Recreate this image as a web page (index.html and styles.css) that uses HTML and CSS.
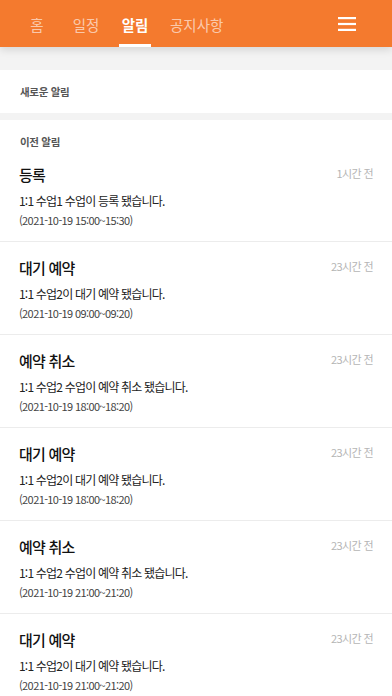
FILE: index.html
```html
<!DOCTYPE html>
<html lang="ko">
<head>
<meta charset="utf-8">
<link rel="stylesheet" href="styles.css">
</head>
<body>
<header class="topbar">
  <nav class="tabs">
    <span class="tab">홈</span>
    <span class="tab">일정</span>
    <span class="tab active">알림</span>
    <span class="tab">공지사항</span>
  </nav>
  <svg class="menu" width="18" height="14" viewBox="0 0 18 14"><rect x="0" y="0" width="18" height="2.2" fill="#fff"/><rect x="0" y="5.9" width="18" height="2.2" fill="#fff"/><rect x="0" y="11.8" width="18" height="2.2" fill="#fff"/></svg>
</header>
<main class="content">
  <section class="card new">
    <div class="label">새로운 알림</div>
  </section>
  <section class="card old">
    <div class="label top">이전 알림</div>
    <div class="item">
      <div class="row"><div class="title">등록</div><div class="time">1시간 전</div></div>
      <div class="desc">1:1 수업1 수업이 등록 됐습니다.</div>
      <div class="date">(2021-10-19 15:00~15:30)</div>
    </div>
    <div class="item">
      <div class="row"><div class="title">대기 예약</div><div class="time">23시간 전</div></div>
      <div class="desc">1:1 수업2이 대기 예약 됐습니다.</div>
      <div class="date">(2021-10-19 09:00~09:20)</div>
    </div>
    <div class="item">
      <div class="row"><div class="title">예약 취소</div><div class="time">23시간 전</div></div>
      <div class="desc">1:1 수업2 수업이 예약 취소 됐습니다.</div>
      <div class="date">(2021-10-19 18:00~18:20)</div>
    </div>
    <div class="item">
      <div class="row"><div class="title">대기 예약</div><div class="time">23시간 전</div></div>
      <div class="desc">1:1 수업2이 대기 예약 됐습니다.</div>
      <div class="date">(2021-10-19 18:00~18:20)</div>
    </div>
    <div class="item">
      <div class="row"><div class="title">예약 취소</div><div class="time">23시간 전</div></div>
      <div class="desc">1:1 수업2 수업이 예약 취소 됐습니다.</div>
      <div class="date">(2021-10-19 21:00~21:20)</div>
    </div>
    <div class="item">
      <div class="row"><div class="title">대기 예약</div><div class="time">23시간 전</div></div>
      <div class="desc">1:1 수업2이 대기 예약 됐습니다.</div>
      <div class="date">(2021-10-19 21:00~21:20)</div>
    </div>
  </section>
</main>
</body>
</html>
```
FILE: styles.css
```css
* { box-sizing: border-box; }
html, body { margin: 0; padding: 0; }
body {
  width: 392px;
  height: 696px;
  overflow: hidden;
  background: #f3f3f3;
  font-family: "Noto Sans CJK KR", "Noto Sans", sans-serif;
  color: #222;
}
.topbar {
  position: relative;
  z-index: 2;
  height: 47px;
  background: #f47a2e;
  display: flex;
  align-items: stretch;
  justify-content: space-between;
  padding: 0 36px 0 21px;
  box-shadow: 0 3px 8px rgba(0,0,0,0.12);
}
.tabs {
  display: flex;
  gap: 17px;
  align-items: stretch;
}
.tab {
  min-width: 32px;
  padding: 4px 2px 0;
  display: flex;
  align-items: center;
  justify-content: center;
  font-size: 14.5px;
  color: rgba(255,255,255,0.62);
  border-bottom: 3px solid transparent;
}
.tab.active {
  color: #fff;
  font-weight: 700;
  border-bottom-color: #fff;
}
.menu { align-self: center; margin-top: 1px; }
.content {
  padding-top: 23px;
  display: flex;
  flex-direction: column;
  gap: 7px;
}
.card { background: #fff; }
.new {
  height: 43px;
  display: flex;
  align-items: center;
  padding: 0 20px;
}
.label {
  font-size: 10.5px;
  font-weight: 700;
  color: #555;
  line-height: 16px;
  letter-spacing: -0.3px;
}
.label.top { padding: 14px 20px 0; }
.item {
  padding: 14px 19px 12px;
  border-bottom: 1px solid #ececec;
}
.item + .item { padding-top: 15px; }
.row {
  display: flex;
  justify-content: space-between;
  align-items: flex-start;
}
.title {
  font-size: 15px;
  font-weight: 500;
  line-height: 22px;
  color: #111;
  letter-spacing: -0.8px;
}
.time {
  font-size: 11px;
  color: #b5b5b5;
  line-height: 16px;
  margin-top: 1px;
  letter-spacing: -0.6px;
}
.desc {
  margin-top: 5px;
  font-size: 12px;
  line-height: 20px;
  color: #222;
  letter-spacing: -0.8px;
}
.date {
  font-size: 11px;
  line-height: 18px;
  color: #444;
  letter-spacing: -0.6px;
}
```
